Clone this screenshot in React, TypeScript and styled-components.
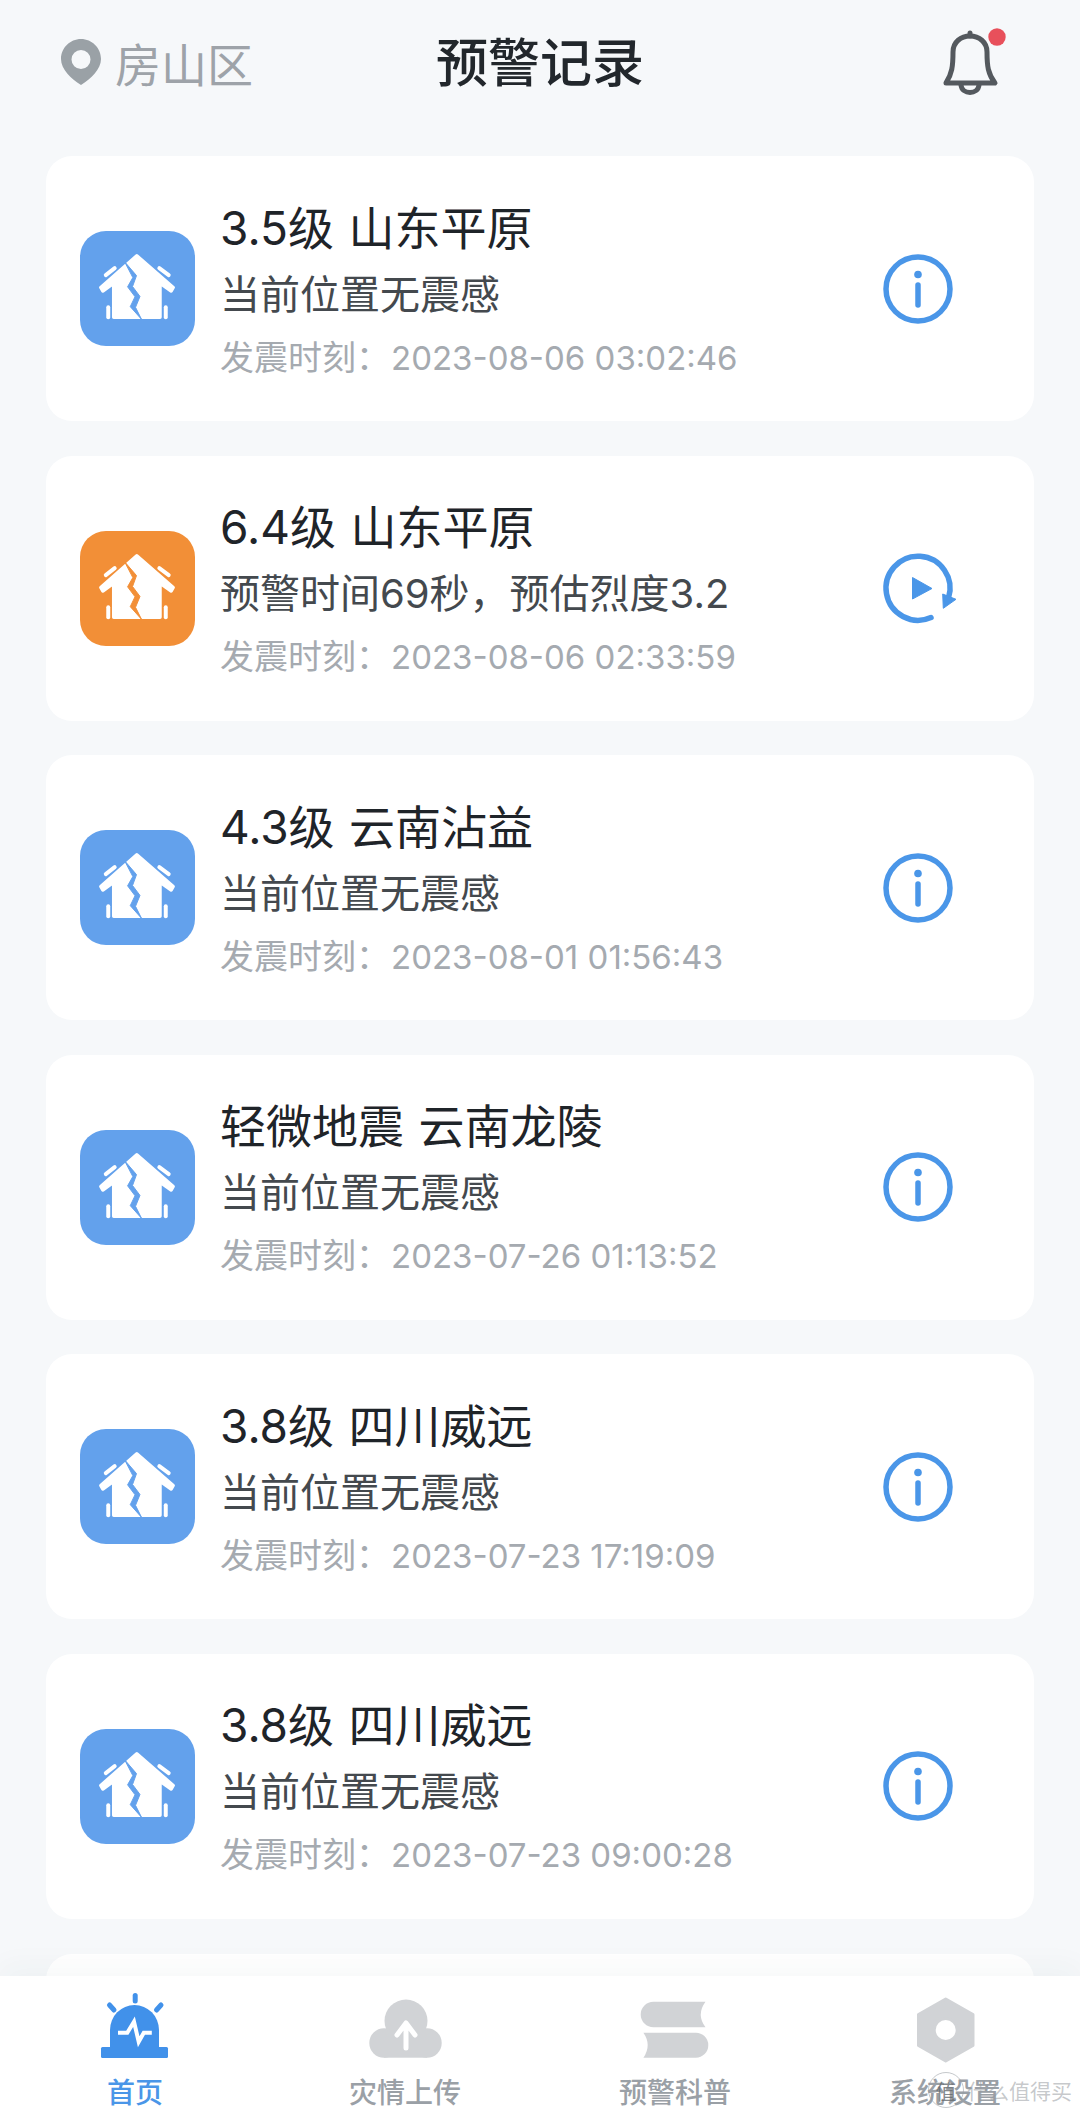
import styled, { createGlobalStyle } from 'styled-components';

const GlobalStyle = createGlobalStyle`
    html, body {
        margin: 0;
        padding: 0;
        background: #f6f8fa;
    }
    * {
        box-sizing: border-box;
    }
`
const Page = styled.div`
    position: relative;
    width: 1080px;
    height: 2113px;
    display: flex;
    flex-direction: column;
    overflow: hidden;
    background: #f6f8fa;
    font-family: 'Inter', 'Noto Sans CJK SC', sans-serif;
`
const Header = styled.header`
    height: 156px;
    flex: none;
    display: grid;
    grid-template-columns: 1fr auto 1fr;
    align-items: start;
    padding: 28px 68px 0 60px;
`
const Location = styled.div`
    display: flex;
    align-items: center;
    gap: 13px;
    height: 68px;
    font-size: 46px;
    color: #9ea3a9;
`
const PageTitle = styled.h1`
    margin: 1px 0 0 8px;
    height: 70px;
    line-height: 70px;
    font-size: 52px;
    font-weight: 500;
    color: #22272c;
`
const BellButton = styled.div`
    justify-self: end;
    height: 72px;
`
const List = styled.main`
    flex: 1;
    min-height: 0;
    overflow: hidden;
    display: flex;
    flex-direction: column;
    gap: 34.6px;
    padding: 0 46px;
`
const Card = styled.article`
    flex: none;
    height: 265px;
    display: flex;
    align-items: center;
    padding: 0 81px 0 34px;
    border-radius: 26px;
    background: #fff;
`
const Tile = styled.div<{ $tone: string }>`
    flex: none;
    width: 115px;
    height: 115px;
    border-radius: 26px;
    background: ${props => props.$tone};
    margin-right: 25px;
`
const Body = styled.div`
    flex: 1;
    min-width: 0;
    padding-top: 7px;
`
const Title = styled.div`
    height: 64px;
    margin-bottom: 3px;
    line-height: 64px;
    font-size: 46px;
    font-weight: 400;
    word-spacing: 1.5px;
    color: #1f2429;
    white-space: nowrap;
`
const Sub = styled.div`
    height: 64px;
    line-height: 64px;
    font-size: 40px;
    color: #44494e;
    white-space: nowrap;
`
const Time = styled.div`
    height: 62px;
    line-height: 62px;
    font-size: 34px;
    color: #a5aab0;
    white-space: nowrap;
`
const TimeValue = styled.span`
    font-size: 33px;
    margin-left: 1px;
`
const ActionIcon = styled.svg`
    flex: none;
    width: 70px;
    height: 70px;
    overflow: visible;
`
const TabBar = styled.nav`
    flex: none;
    height: 137px;
    display: grid;
    grid-template-columns: repeat(4, 270px);
    background: #fff;
    box-shadow: 0 -12px 26px rgba(40, 50, 60, 0.03);
`
const Tab = styled.div`
    display: flex;
    flex-direction: column;
    align-items: center;
    padding-top: 16px;
`
const TabIcon = styled.svg`
    width: 72px;
    height: 72px;
    overflow: visible;
`
const TabLabel = styled.div<{ $active?: boolean }>`
    margin-top: 9px;
    line-height: 40px;
    font-size: 28px;
    font-weight: 500;
    color: ${props => props.$active ? '#4a96e8' : '#9aa0a6'};
`
const Watermark = styled.div`
    position: absolute;
    right: 8px;
    bottom: 5px;
    display: flex;
    align-items: center;
    gap: 3px;
    font-size: 21px;
    color: rgba(150, 155, 160, 0.55);
`
const WatermarkBadge = styled.span`
    width: 36px;
    height: 36px;
    display: flex;
    align-items: center;
    justify-content: center;
    border: 1px solid rgba(150, 155, 160, 0.55);
    border-radius: 50%;
    color: rgba(100, 105, 110, 0.8);
`

const records = [
    { title: '3.5级 山东平原', sub: '当前位置无震感', time: '2023-08-06 03:02:46' },
    { title: '6.4级 山东平原', sub: '预警时间69秒，预估烈度3.2', time: '2023-08-06 02:33:59', warned: true },
    { title: '4.3级 云南沾益', sub: '当前位置无震感', time: '2023-08-01 01:56:43' },
    { title: '轻微地震 云南龙陵', sub: '当前位置无震感', time: '2023-07-26 01:13:52' },
    { title: '3.8级 四川威远', sub: '当前位置无震感', time: '2023-07-23 17:19:09' },
    { title: '3.8级 四川威远', sub: '当前位置无震感', time: '2023-07-23 09:00:28' },
];

function HouseIcon({ tone }: { tone: string }) {
    return (
        <svg width="115" height="115" viewBox="0 0 116 116">
            <path
                d="M57.3 25 L21 57 L23 60.5 L34 52.5 V87 H80.7 V52.5 L92 60.5 L94 57 Z"
                fill="#fff"
                stroke="#fff"
                strokeWidth="3.5"
                strokeLinejoin="round"
            />
            <path
                d="M45 31 L53.3 47 L48 56.3 L55.5 66.3 L50.7 76.3 L62 89 L56 77 L60.5 66 L53 56 L57 45 Z"
                fill={tone}
                stroke={tone}
                strokeWidth="1"
            />
            <g stroke="#fff" strokeWidth="4" strokeLinecap="round" fill="none">
                <path d="M26 44.5 L35 37.5" />
                <path d="M80 37.5 L89.5 44.5" />
                <path d="M28.5 77 V87" />
                <path d="M86.5 77 V87" />
            </g>
        </svg>
    )
}

function InfoIcon() {
    return (
        <ActionIcon viewBox="0 0 70 70">
            <circle cx="35" cy="35" r="32" fill="none" stroke="#4a96e8" strokeWidth="5.5" />
            <circle cx="35" cy="20.5" r="3.8" fill="#4a96e8" />
            <path d="M35 31 V51" stroke="#4a96e8" strokeWidth="5.5" strokeLinecap="round" />
        </ActionIcon>
    )
}

function ReplayIcon() {
    return (
        <ActionIcon viewBox="23 23 70 70">
            <path
                d="M71 87.5 A32 32 0 1 1 88.5 68"
                fill="none"
                stroke="#4a96e8"
                strokeWidth="5.5"
                strokeLinecap="round"
            />
            <path d="M82.7 64 L96 69.3 L83.3 78.3 Z" fill="#4a96e8" stroke="#4a96e8" strokeWidth="1" strokeLinejoin="round" />
            <path d="M52.5 47.5 L72 58.5 L52.5 69 Z" fill="#4a96e8" stroke="#4a96e8" strokeWidth="1" strokeLinejoin="round" />
        </ActionIcon>
    )
}

export default function App() {
    return (
        <Page>
            <GlobalStyle />
            <Header>
                <Location>
                    <svg width="42" height="46" viewBox="0 0 42 46">
                        <path
                            fillRule="evenodd"
                            d="M21 0 C32 0 41 9 41 20 C41 30 31 40 21 46 C11 40 1 30 1 20 C1 9 10 0 21 0 Z M21 11 A9.5 9.5 0 1 0 21 30 A9.5 9.5 0 1 0 21 11 Z"
                            fill="#9aa1a6"
                        />
                    </svg>
                    房山区
                </Location>
                <PageTitle>预警记录</PageTitle>
                <BellButton>
                    <svg width="72" height="72" viewBox="0 0 72 72">
                        <g fill="none" stroke="#54595e" strokeWidth="5" strokeLinejoin="round" strokeLinecap="round">
                            <path d="M6 55 C12 46 13 38 13 24 C13 14 21 8 30 8 C39 8 47 14 47 24 C47 38 48 46 55 55 Z" />
                            <path d="M21 57 C22 67 38 67 39 57" />
                            <path d="M30 5 V8" />
                        </g>
                        <circle cx="57" cy="9" r="8.7" fill="#e8505b" />
                    </svg>
                </BellButton>
            </Header>
            <List>
                {
                    records.map((record, i) => {
                        const tone = record.warned ? '#f28f37' : '#63a1ec';
                        return (
                            <Card key={i}>
                                <Tile $tone={tone}>
                                    <HouseIcon tone={tone} />
                                </Tile>
                                <Body>
                                    <Title>{record.title}</Title>
                                    <Sub>{record.sub}</Sub>
                                    <Time>发震时刻：<TimeValue>{record.time}</TimeValue></Time>
                                </Body>
                                {record.warned ? <ReplayIcon /> : <InfoIcon />}
                            </Card>
                        )
                    })
                }
                <Card />
            </List>
            <TabBar>
                <Tab>
                    <TabIcon viewBox="0 0 72 72">
                        <rect x="2" y="55" width="67" height="11" rx="1.5" fill="#4191ea" />
                        <path d="M11 56 V38 A24.5 25 0 0 1 60 38 V56 Z" fill="#4191ea" />
                        <path d="M19 40.7 H28.3 L35 29.7 L39.7 49.7 L44.8 40.7 H52.8" fill="none" stroke="#fff" strokeWidth="4" />
                        <g stroke="#4191ea" strokeWidth="5" strokeLinecap="round">
                            <path d="M36.2 3.5 V9" />
                            <path d="M10.5 13 L15 18" />
                            <path d="M62 13 L57.5 18" />
                        </g>
                    </TabIcon>
                    <TabLabel $active>首页</TabLabel>
                </Tab>
                <Tab>
                    <TabIcon viewBox="0 0 72 72">
                        <g fill="#d1d3d6">
                            <circle cx="37" cy="29" r="21.5" />
                            <circle cx="15" cy="51" r="14.7" />
                            <circle cx="58" cy="51" r="14.7" />
                            <rect x="15" y="40" width="43" height="25.7" />
                        </g>
                        <path d="M37 56 V31 M28 43 L37 31 L46 43" fill="none" stroke="#fff" strokeWidth="5" strokeLinecap="round" strokeLinejoin="round" />
                    </TabIcon>
                    <TabLabel>灾情上传</TabLabel>
                </Tab>
                <Tab>
                    <TabIcon viewBox="0 0 72 72">
                        <path d="M14.5 9.7 H66.5 Q57 22.5 66.5 35.3 H14.5 A12.8 12.8 0 0 1 14.5 9.7 Z" fill="#d1d3d6" />
                        <path d="M4.4 40.7 H56.8 A12.5 12.5 0 0 1 56.8 65.7 H4.4 Q13 53 4.4 40.7 Z" fill="#d1d3d6" />
                    </TabIcon>
                    <TabLabel>预警科普</TabLabel>
                </Tab>
                <Tab>
                    <TabIcon viewBox="0 0 72 72">
                        <path
                            fillRule="evenodd"
                            d="M36.7 7 L64 22.5 V53.5 L36.7 69 L9.5 53.5 V22.5 Z M36.7 26.5 A11.5 11.5 0 1 0 36.7 49.5 A11.5 11.5 0 1 0 36.7 26.5 Z"
                            fill="#d1d3d6"
                            stroke="#d1d3d6"
                            strokeWidth="3"
                            strokeLinejoin="round"
                        />
                    </TabIcon>
                    <TabLabel>系统设置</TabLabel>
                </Tab>
            </TabBar>
            <Watermark>
                <WatermarkBadge>值</WatermarkBadge>
                什么值得买
            </Watermark>
        </Page>
    )
}
